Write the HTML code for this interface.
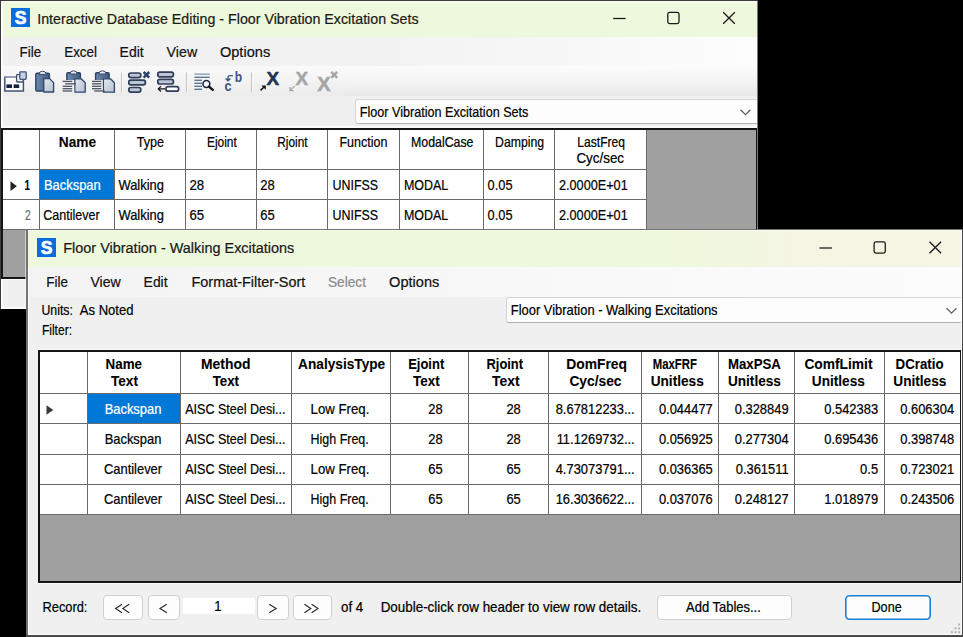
<!DOCTYPE html>
<html><head><meta charset="utf-8"><title>Floor Vibration</title>
<style>
html,body{margin:0;padding:0;}
body{width:963px;height:637px;background:#000;overflow:hidden;position:relative;font-family:"Liberation Sans",sans-serif;}
.r{position:absolute;}
.t{position:absolute;white-space:nowrap;-webkit-text-stroke:0.22px;line-height:20px;transform-origin:0 0;font-family:"Liberation Sans",sans-serif;}
svg{position:absolute;overflow:visible;}
</style></head><body>
<div class="r" style="left:0px;top:0px;width:758px;height:309px;background:#3c3c3c;"></div>
<div class="r" style="left:1px;top:1px;width:756px;height:308px;background:#fcfcfc;"></div>
<div class="r" style="left:757px;top:1px;width:1px;height:308px;background:#7a7a7a;"></div>
<div class="r" style="left:1px;top:1px;width:756px;height:2px;background:#f7fbee;"></div>
<div class="r" style="left:3px;top:3px;width:754px;height:34px;background:#eef8dc;"></div>
<div class="r" style="left:3px;top:37px;width:754px;height:29px;background:linear-gradient(90deg,#f0f0f0 0%,#f2f2f2 50%,#fdfdfd 100%);"></div>
<div class="r" style="left:3px;top:66px;width:754px;height:31px;background:linear-gradient(180deg,#fcfcfc 0%,#f4f4f4 50%,#e7e7e7 100%);"></div>
<div class="r" style="left:3px;top:66px;width:342px;height:30px;background:linear-gradient(180deg,#fafafa 0%,#f3f3f3 50%,#ececec 100%);border-radius:0 0 3px 0;"></div>
<div class="r" style="left:3px;top:96px;width:753px;height:211px;background:#f0f0f0;"></div>
<div class="r" style="left:11px;top:8px;width:19px;height:19px;background:#0a6ddc;"></div>
<svg style="left:11px;top:8px" width="19" height="19" viewBox="0 0 19 19"><text x="9.5" y="15.6" font-family="Liberation Sans" font-weight="bold" font-size="17.5" fill="#fff" stroke="#fff" stroke-width="0.7" text-anchor="middle">S</text></svg>
<span class="t" style="left:37px;top:9px;font-size:15.2px;color:#1a1a1a;transform:translateX(0.20px) scaleX(0.9379);">Interactive Database Editing - Floor Vibration Excitation Sets</span>
<svg style="left:0;top:0" width="963" height="637"><path d="M613.2 18.5h12.4" stroke="#1a1a1a" stroke-width="1.3" fill="none"/><rect x="667.8" y="12.4" width="11.2" height="11.2" rx="1.8" stroke="#1a1a1a" stroke-width="1.3" fill="none"/><path d="M723.2 12.2l11.6 11.6M734.8 12.2l-11.6 11.6" stroke="#1a1a1a" stroke-width="1.3" fill="none"/></svg>
<span class="t" style="left:19px;top:42px;font-size:15.2px;color:#111;transform:translateX(0.60px) scaleX(0.8850);">File</span>
<span class="t" style="left:64px;top:42px;font-size:15.2px;color:#111;transform:translateX(0.20px) scaleX(0.8828);">Excel</span>
<span class="t" style="left:119px;top:42px;font-size:15.2px;color:#111;transform:translateX(0.60px) scaleX(0.9195);">Edit</span>
<span class="t" style="left:166px;top:42px;font-size:15.2px;color:#111;transform:translateX(0.60px) scaleX(0.9366);">View</span>
<span class="t" style="left:219px;top:42px;font-size:15.2px;color:#111;transform:translateX(0.90px) scaleX(0.9607);">Options</span>
<div class="r" style="left:355px;top:99px;width:402px;height:25px;background:#fdfdfd;border:1px solid #d6d6d6;border-bottom-color:#b4b4b4;border-right:none;border-radius:3px 0 0 3px;box-sizing:border-box;"></div>
<svg style="left:0;top:0" width="963" height="637"><path d="M740.6 109.69999999999999l4.9 4.9 4.9-4.9" stroke="#606060" stroke-width="1.3" fill="none"/></svg>
<span class="t" style="left:359px;top:102px;font-size:15px;color:#000;transform:translateX(0.80px) scaleX(0.8401);">Floor Vibration Excitation Sets</span>
<div class="r" style="left:1px;top:126px;width:755px;height:2px;background:#fbfbfb;"></div>
<div class="r" style="left:1px;top:128px;width:756px;height:151px;background:#161616;"></div>
<div class="r" style="left:3px;top:130px;width:753px;height:147px;background:#a0a0a0;"></div>
<div class="r" style="left:1px;top:279px;width:755px;height:1px;background:#fbfbfb;"></div>
<div class="r" style="left:3px;top:130px;width:644px;height:100px;background:#6a6a6a;"></div>
<div class="r" style="left:3px;top:130px;width:36px;height:39px;background:#fff;"></div>
<div class="r" style="left:3px;top:170px;width:36px;height:29px;background:#fff;"></div>
<div class="r" style="left:3px;top:200px;width:36px;height:29px;background:#fff;"></div>
<div class="r" style="left:40px;top:130px;width:74px;height:39px;background:#fff;"></div>
<div class="r" style="left:40px;top:170px;width:74px;height:29px;background:#fff;"></div>
<div class="r" style="left:40px;top:200px;width:74px;height:29px;background:#fff;"></div>
<div class="r" style="left:115px;top:130px;width:70px;height:39px;background:#fff;"></div>
<div class="r" style="left:115px;top:170px;width:70px;height:29px;background:#fff;"></div>
<div class="r" style="left:115px;top:200px;width:70px;height:29px;background:#fff;"></div>
<div class="r" style="left:186px;top:130px;width:70px;height:39px;background:#fff;"></div>
<div class="r" style="left:186px;top:170px;width:70px;height:29px;background:#fff;"></div>
<div class="r" style="left:186px;top:200px;width:70px;height:29px;background:#fff;"></div>
<div class="r" style="left:257px;top:130px;width:70px;height:39px;background:#fff;"></div>
<div class="r" style="left:257px;top:170px;width:70px;height:29px;background:#fff;"></div>
<div class="r" style="left:257px;top:200px;width:70px;height:29px;background:#fff;"></div>
<div class="r" style="left:328px;top:130px;width:71px;height:39px;background:#fff;"></div>
<div class="r" style="left:328px;top:170px;width:71px;height:29px;background:#fff;"></div>
<div class="r" style="left:328px;top:200px;width:71px;height:29px;background:#fff;"></div>
<div class="r" style="left:400px;top:130px;width:83px;height:39px;background:#fff;"></div>
<div class="r" style="left:400px;top:170px;width:83px;height:29px;background:#fff;"></div>
<div class="r" style="left:400px;top:200px;width:83px;height:29px;background:#fff;"></div>
<div class="r" style="left:484px;top:130px;width:70px;height:39px;background:#fff;"></div>
<div class="r" style="left:484px;top:170px;width:70px;height:29px;background:#fff;"></div>
<div class="r" style="left:484px;top:200px;width:70px;height:29px;background:#fff;"></div>
<div class="r" style="left:555px;top:130px;width:91px;height:39px;background:#fff;"></div>
<div class="r" style="left:555px;top:170px;width:91px;height:29px;background:#fff;"></div>
<div class="r" style="left:555px;top:200px;width:91px;height:29px;background:#fff;"></div>
<div class="r" style="left:40px;top:170px;width:74px;height:29px;background:#0078d7;"></div>
<span class="t" style="left:58px;top:132px;font-size:15px;font-weight:bold;-webkit-text-stroke:0.08px;color:#000;transform:translateX(0.80px) scaleX(0.9150);">Name</span>
<span class="t" style="left:136px;top:132px;font-size:15px;color:#000;transform:translateX(0.70px) scaleX(0.8400);">Type</span>
<span class="t" style="left:206px;top:132px;font-size:15px;color:#000;transform:translateX(0.90px) scaleX(0.7973);">Ejoint</span>
<span class="t" style="left:277px;top:132px;font-size:15px;color:#000;transform:translateX(0.20px) scaleX(0.7922);">Rjoint</span>
<span class="t" style="left:339px;top:132px;font-size:15px;color:#000;transform:translateX(0.50px) scaleX(0.8321);">Function</span>
<span class="t" style="left:411px;top:132px;font-size:15px;color:#000;transform:translateX(0.00px) scaleX(0.8237);">ModalCase</span>
<span class="t" style="left:495px;top:132px;font-size:15px;color:#000;transform:translateX(0.10px) scaleX(0.8175);">Damping</span>
<span class="t" style="left:577px;top:132px;font-size:15px;color:#000;transform:translateX(0.30px) scaleX(0.8059);">LastFreq</span>
<span class="t" style="left:576px;top:148px;font-size:15px;color:#000;transform:translateX(0.40px) scaleX(0.8937);">Cyc/sec</span>
<span class="t" style="left:44px;top:175px;font-size:15px;color:#fff;transform:translateX(0.00px) scaleX(0.8607);">Backspan</span>
<span class="t" style="left:118px;top:175px;font-size:15px;color:#000;transform:translateX(0.40px) scaleX(0.8634);">Walking</span>
<span class="t" style="left:189px;top:175px;font-size:15px;color:#000;transform:translateX(0.50px) scaleX(0.8809);">28</span>
<span class="t" style="left:260px;top:175px;font-size:15px;color:#000;transform:translateX(0.20px) scaleX(0.8689);">28</span>
<span class="t" style="left:332px;top:175px;font-size:15px;color:#000;transform:translateX(0.50px) scaleX(0.8291);">UNIFSS</span>
<span class="t" style="left:404px;top:175px;font-size:15px;color:#000;transform:translateX(0.00px) scaleX(0.8300);">MODAL</span>
<span class="t" style="left:487px;top:175px;font-size:15px;color:#000;transform:translateX(0.60px) scaleX(0.8531);">0.05</span>
<span class="t" style="left:559px;top:175px;font-size:15px;color:#000;transform:translateX(0.00px) scaleX(0.8449);">2.0000E+01</span>
<span class="t" style="left:43px;top:205px;font-size:15px;color:#000;transform:translateX(0.20px) scaleX(0.8363);">Cantilever</span>
<span class="t" style="left:118px;top:205px;font-size:15px;color:#000;transform:translateX(0.40px) scaleX(0.8634);">Walking</span>
<span class="t" style="left:189px;top:205px;font-size:15px;color:#000;transform:translateX(0.50px) scaleX(0.8809);">65</span>
<span class="t" style="left:260px;top:205px;font-size:15px;color:#000;transform:translateX(0.20px) scaleX(0.8689);">65</span>
<span class="t" style="left:332px;top:205px;font-size:15px;color:#000;transform:translateX(0.50px) scaleX(0.8291);">UNIFSS</span>
<span class="t" style="left:404px;top:205px;font-size:15px;color:#000;transform:translateX(0.00px) scaleX(0.8300);">MODAL</span>
<span class="t" style="left:487px;top:205px;font-size:15px;color:#000;transform:translateX(0.60px) scaleX(0.8531);">0.05</span>
<span class="t" style="left:559px;top:205px;font-size:15px;color:#000;transform:translateX(0.00px) scaleX(0.8449);">2.0000E+01</span>
<span class="t" style="left:24px;top:175px;font-size:14.5px;font-weight:bold;-webkit-text-stroke:0.08px;color:#000;transform:translateX(0.50px) scaleX(0.6822);">1</span>
<span class="t" style="left:25px;top:205px;font-size:14.5px;color:#6d6d6d;transform:translateX(0.00px) scaleX(0.7070);">2</span>
<svg style="left:0;top:0" width="963" height="637"><path d="M10.5 181.3v9.8l6.3-4.9z" fill="#222"/></svg>
<div class="r" style="left:25px;top:231px;width:1px;height:78px;background:rgba(255,255,255,0.55);"></div>
<div class="r" style="left:26px;top:229px;width:937px;height:408px;background:#727272;"></div>
<div class="r" style="left:28px;top:230px;width:934px;height:405px;background:#fcfcfc;"></div>
<div class="r" style="left:28px;top:230px;width:933px;height:37px;background:linear-gradient(90deg,#eef8dc 0%,#eef8dc 69%,#f4f5e3 83%,#f4f5e3 100%);"></div>
<div class="r" style="left:28px;top:230px;width:933px;height:1px;background:#f7fbee;"></div>
<div class="r" style="left:29px;top:267px;width:932px;height:368px;background:#f0f0f0;"></div>
<div class="r" style="left:29px;top:267px;width:932px;height:30px;background:linear-gradient(90deg,#f3f3f3 0%,#f8f8f8 50%,#fcfcfc 100%);"></div>
<div class="r" style="left:37px;top:238px;width:19px;height:19px;background:#0a6ddc;"></div>
<svg style="left:37px;top:238px" width="19" height="19" viewBox="0 0 19 19"><text x="9.5" y="15.6" font-family="Liberation Sans" font-weight="bold" font-size="17.5" fill="#fff" stroke="#fff" stroke-width="0.7" text-anchor="middle">S</text></svg>
<span class="t" style="left:63px;top:238px;font-size:15.2px;color:#1a1a1a;transform:translateX(0.30px) scaleX(0.9502);">Floor Vibration - Walking Excitations</span>
<svg style="left:0;top:0" width="963" height="637"><path d="M819.5 248.0h12.4" stroke="#1a1a1a" stroke-width="1.3" fill="none"/><rect x="874.1" y="241.9" width="11.2" height="11.2" rx="1.8" stroke="#1a1a1a" stroke-width="1.3" fill="none"/><path d="M929.5 241.7l11.6 11.6M941.0999999999999 241.7l-11.6 11.6" stroke="#1a1a1a" stroke-width="1.3" fill="none"/></svg>
<span class="t" style="left:46px;top:272px;font-size:15.2px;color:#111;transform:translateX(0.30px) scaleX(0.8891);">File</span>
<span class="t" style="left:90px;top:272px;font-size:15.2px;color:#111;transform:translateX(0.40px) scaleX(0.9305);">View</span>
<span class="t" style="left:143px;top:272px;font-size:15.2px;color:#111;transform:translateX(0.60px) scaleX(0.9157);">Edit</span>
<span class="t" style="left:191px;top:272px;font-size:15.2px;color:#111;transform:translateX(0.50px) scaleX(0.9499);">Format-Filter-Sort</span>
<span class="t" style="left:328px;top:272px;font-size:15.2px;color:#8a8a8a;transform:translateX(0.00px) scaleX(0.9000);">Select</span>
<span class="t" style="left:389px;top:272px;font-size:15.2px;color:#111;transform:translateX(0.10px) scaleX(0.9588);">Options</span>
<span class="t" style="left:41px;top:300px;font-size:14.5px;color:#000;transform:translateX(0.50px) scaleX(0.8472);">Units:</span>
<span class="t" style="left:79px;top:300px;font-size:14.5px;color:#000;transform:translateX(0.80px) scaleX(0.9006);">As Noted</span>
<span class="t" style="left:41px;top:320px;font-size:14.5px;color:#000;transform:translateX(0.90px) scaleX(0.8303);">Filter:</span>
<div class="r" style="left:506px;top:297px;width:457px;height:26px;background:#fdfdfd;border:1px solid #d6d6d6;border-bottom-color:#b4b4b4;border-right:none;border-radius:3px 0 0 3px;box-sizing:border-box;"></div>
<svg style="left:0;top:0" width="963" height="637"><path d="M946.6 308.20000000000005l4.9 4.9 4.9-4.9" stroke="#606060" stroke-width="1.3" fill="none"/></svg>
<span class="t" style="left:510px;top:300px;font-size:14.5px;color:#000;transform:translateX(0.80px) scaleX(0.8909);">Floor Vibration - Walking Excitations</span>
<div class="r" style="left:38px;top:349px;width:923px;height:1px;background:#fbfbfb;"></div>
<div class="r" style="left:38px;top:350px;width:924px;height:233px;background:#161616;"></div>
<div class="r" style="left:38px;top:583px;width:923px;height:1px;background:#fafafa;"></div>
<div class="r" style="left:40px;top:352px;width:920px;height:229px;background:#a0a0a0;"></div>
<div class="r" style="left:40px;top:352px;width:920px;height:163px;background:#6a6a6a;"></div>
<div class="r" style="left:40px;top:352px;width:47px;height:41px;background:#fff;"></div>
<div class="r" style="left:40px;top:394px;width:47px;height:29px;background:#fff;"></div>
<div class="r" style="left:40px;top:424px;width:47px;height:30px;background:#fff;"></div>
<div class="r" style="left:40px;top:455px;width:47px;height:29px;background:#fff;"></div>
<div class="r" style="left:40px;top:485px;width:47px;height:29px;background:#fff;"></div>
<div class="r" style="left:88px;top:352px;width:92px;height:41px;background:#fff;"></div>
<div class="r" style="left:88px;top:394px;width:92px;height:29px;background:#fff;"></div>
<div class="r" style="left:88px;top:424px;width:92px;height:30px;background:#fff;"></div>
<div class="r" style="left:88px;top:455px;width:92px;height:29px;background:#fff;"></div>
<div class="r" style="left:88px;top:485px;width:92px;height:29px;background:#fff;"></div>
<div class="r" style="left:181px;top:352px;width:110px;height:41px;background:#fff;"></div>
<div class="r" style="left:181px;top:394px;width:110px;height:29px;background:#fff;"></div>
<div class="r" style="left:181px;top:424px;width:110px;height:30px;background:#fff;"></div>
<div class="r" style="left:181px;top:455px;width:110px;height:29px;background:#fff;"></div>
<div class="r" style="left:181px;top:485px;width:110px;height:29px;background:#fff;"></div>
<div class="r" style="left:292px;top:352px;width:98px;height:41px;background:#fff;"></div>
<div class="r" style="left:292px;top:394px;width:98px;height:29px;background:#fff;"></div>
<div class="r" style="left:292px;top:424px;width:98px;height:30px;background:#fff;"></div>
<div class="r" style="left:292px;top:455px;width:98px;height:29px;background:#fff;"></div>
<div class="r" style="left:292px;top:485px;width:98px;height:29px;background:#fff;"></div>
<div class="r" style="left:391px;top:352px;width:77px;height:41px;background:#fff;"></div>
<div class="r" style="left:391px;top:394px;width:77px;height:29px;background:#fff;"></div>
<div class="r" style="left:391px;top:424px;width:77px;height:30px;background:#fff;"></div>
<div class="r" style="left:391px;top:455px;width:77px;height:29px;background:#fff;"></div>
<div class="r" style="left:391px;top:485px;width:77px;height:29px;background:#fff;"></div>
<div class="r" style="left:469px;top:352px;width:79px;height:41px;background:#fff;"></div>
<div class="r" style="left:469px;top:394px;width:79px;height:29px;background:#fff;"></div>
<div class="r" style="left:469px;top:424px;width:79px;height:30px;background:#fff;"></div>
<div class="r" style="left:469px;top:455px;width:79px;height:29px;background:#fff;"></div>
<div class="r" style="left:469px;top:485px;width:79px;height:29px;background:#fff;"></div>
<div class="r" style="left:549px;top:352px;width:92px;height:41px;background:#fff;"></div>
<div class="r" style="left:549px;top:394px;width:92px;height:29px;background:#fff;"></div>
<div class="r" style="left:549px;top:424px;width:92px;height:30px;background:#fff;"></div>
<div class="r" style="left:549px;top:455px;width:92px;height:29px;background:#fff;"></div>
<div class="r" style="left:549px;top:485px;width:92px;height:29px;background:#fff;"></div>
<div class="r" style="left:642px;top:352px;width:76px;height:41px;background:#fff;"></div>
<div class="r" style="left:642px;top:394px;width:76px;height:29px;background:#fff;"></div>
<div class="r" style="left:642px;top:424px;width:76px;height:30px;background:#fff;"></div>
<div class="r" style="left:642px;top:455px;width:76px;height:29px;background:#fff;"></div>
<div class="r" style="left:642px;top:485px;width:76px;height:29px;background:#fff;"></div>
<div class="r" style="left:719px;top:352px;width:75px;height:41px;background:#fff;"></div>
<div class="r" style="left:719px;top:394px;width:75px;height:29px;background:#fff;"></div>
<div class="r" style="left:719px;top:424px;width:75px;height:30px;background:#fff;"></div>
<div class="r" style="left:719px;top:455px;width:75px;height:29px;background:#fff;"></div>
<div class="r" style="left:719px;top:485px;width:75px;height:29px;background:#fff;"></div>
<div class="r" style="left:795px;top:352px;width:89px;height:41px;background:#fff;"></div>
<div class="r" style="left:795px;top:394px;width:89px;height:29px;background:#fff;"></div>
<div class="r" style="left:795px;top:424px;width:89px;height:30px;background:#fff;"></div>
<div class="r" style="left:795px;top:455px;width:89px;height:29px;background:#fff;"></div>
<div class="r" style="left:795px;top:485px;width:89px;height:29px;background:#fff;"></div>
<div class="r" style="left:885px;top:352px;width:75px;height:41px;background:#fff;"></div>
<div class="r" style="left:885px;top:394px;width:75px;height:29px;background:#fff;"></div>
<div class="r" style="left:885px;top:424px;width:75px;height:30px;background:#fff;"></div>
<div class="r" style="left:885px;top:455px;width:75px;height:29px;background:#fff;"></div>
<div class="r" style="left:885px;top:485px;width:75px;height:29px;background:#fff;"></div>
<div class="r" style="left:88px;top:394px;width:92px;height:29px;background:#0078d7;"></div>
<span class="t" style="left:105px;top:354px;font-size:14px;font-weight:bold;-webkit-text-stroke:0.08px;color:#000;transform:translateX(0.60px) scaleX(0.9548);">Name</span>
<span class="t" style="left:111px;top:371px;font-size:14px;font-weight:bold;-webkit-text-stroke:0.08px;color:#000;transform:translateX(0.00px) scaleX(0.9694);">Text</span>
<span class="t" style="left:201px;top:354px;font-size:14px;font-weight:bold;-webkit-text-stroke:0.08px;color:#000;transform:translateX(0.00px) scaleX(0.9930);">Method</span>
<span class="t" style="left:212px;top:371px;font-size:14px;font-weight:bold;-webkit-text-stroke:0.08px;color:#000;transform:translateX(0.70px) scaleX(0.9477);">Text</span>
<span class="t" style="left:298px;top:354px;font-size:14px;font-weight:bold;-webkit-text-stroke:0.08px;color:#000;transform:translateX(0.10px) scaleX(0.9759);">AnalysisType</span>
<span class="t" style="left:408px;top:354px;font-size:14px;font-weight:bold;-webkit-text-stroke:0.08px;color:#000;transform:translateX(0.20px) scaleX(0.9260);">Ejoint</span>
<span class="t" style="left:413px;top:371px;font-size:14px;font-weight:bold;-webkit-text-stroke:0.08px;color:#000;transform:translateX(0.10px) scaleX(0.9622);">Text</span>
<span class="t" style="left:486px;top:354px;font-size:14px;font-weight:bold;-webkit-text-stroke:0.08px;color:#000;transform:translateX(0.50px) scaleX(0.9211);">Rjoint</span>
<span class="t" style="left:492px;top:371px;font-size:14px;font-weight:bold;-webkit-text-stroke:0.08px;color:#000;transform:translateX(0.00px) scaleX(0.9910);">Text</span>
<span class="t" style="left:566px;top:354px;font-size:14px;font-weight:bold;-webkit-text-stroke:0.08px;color:#000;transform:translateX(0.20px) scaleX(0.9896);">DomFreq</span>
<span class="t" style="left:569px;top:371px;font-size:14px;font-weight:bold;-webkit-text-stroke:0.08px;color:#000;transform:translateX(0.40px) scaleX(0.9842);">Cyc/sec</span>
<span class="t" style="left:652px;top:354px;font-size:14px;font-weight:bold;-webkit-text-stroke:0.08px;color:#000;transform:translateX(0.70px) scaleX(0.8138);">MaxFRF</span>
<span class="t" style="left:650px;top:371px;font-size:14px;font-weight:bold;-webkit-text-stroke:0.08px;color:#000;transform:translateX(0.70px) scaleX(0.9736);">Unitless</span>
<span class="t" style="left:727px;top:354px;font-size:14px;font-weight:bold;-webkit-text-stroke:0.08px;color:#000;transform:translateX(0.90px) scaleX(0.9464);">MaxPSA</span>
<span class="t" style="left:727px;top:371px;font-size:14px;font-weight:bold;-webkit-text-stroke:0.08px;color:#000;transform:translateX(0.90px) scaleX(0.9736);">Unitless</span>
<span class="t" style="left:804px;top:354px;font-size:14px;font-weight:bold;-webkit-text-stroke:0.08px;color:#000;transform:translateX(0.40px) scaleX(0.9843);">ComfLimit</span>
<span class="t" style="left:811px;top:371px;font-size:14px;font-weight:bold;-webkit-text-stroke:0.08px;color:#000;transform:translateX(0.80px) scaleX(0.9736);">Unitless</span>
<span class="t" style="left:895px;top:354px;font-size:14px;font-weight:bold;-webkit-text-stroke:0.08px;color:#000;transform:translateX(0.60px) scaleX(0.9493);">DCratio</span>
<span class="t" style="left:893px;top:371px;font-size:14px;font-weight:bold;-webkit-text-stroke:0.08px;color:#000;transform:translateX(0.30px) scaleX(0.9736);">Unitless</span>
<span class="t" style="left:104px;top:399px;font-size:14.5px;color:#fff;transform:translateX(0.63px) scaleX(0.8910);">Backspan</span>
<span class="t" style="left:185px;top:399px;font-size:14.5px;color:#000;transform:translateX(0.20px) scaleX(0.8642);">AISC Steel Desi...</span>
<span class="t" style="left:310px;top:399px;font-size:14.5px;color:#000;transform:translateX(0.60px) scaleX(0.9116);">Low Freq.</span>
<span class="t" style="left:428px;top:399px;font-size:14.5px;color:#000;transform:translateX(0.32px) scaleX(0.8910);">28</span>
<span class="t" style="left:506px;top:399px;font-size:14.5px;color:#000;transform:translateX(0.42px) scaleX(0.8910);">28</span>
<span class="t" style="left:555px;top:399px;font-size:14.5px;color:#000;transform:translateX(0.68px) scaleX(0.8910);">8.67812233...</span>
<span class="t" style="left:658px;top:399px;font-size:14.5px;color:#000;transform:translateX(0.89px) scaleX(0.8910);">0.044477</span>
<span class="t" style="left:734px;top:399px;font-size:14.5px;color:#000;transform:translateX(0.69px) scaleX(0.8910);">0.328849</span>
<span class="t" style="left:824px;top:399px;font-size:14.5px;color:#000;transform:translateX(0.19px) scaleX(0.8910);">0.542383</span>
<span class="t" style="left:900px;top:399px;font-size:14.5px;color:#000;transform:translateX(0.19px) scaleX(0.8910);">0.606304</span>
<span class="t" style="left:104px;top:429px;font-size:14.5px;color:#000;transform:translateX(0.63px) scaleX(0.8910);">Backspan</span>
<span class="t" style="left:185px;top:429px;font-size:14.5px;color:#000;transform:translateX(0.20px) scaleX(0.8642);">AISC Steel Desi...</span>
<span class="t" style="left:310px;top:429px;font-size:14.5px;color:#000;transform:translateX(0.60px) scaleX(0.8584);">High Freq.</span>
<span class="t" style="left:428px;top:429px;font-size:14.5px;color:#000;transform:translateX(0.32px) scaleX(0.8910);">28</span>
<span class="t" style="left:506px;top:429px;font-size:14.5px;color:#000;transform:translateX(0.42px) scaleX(0.8910);">28</span>
<span class="t" style="left:556px;top:429px;font-size:14.5px;color:#000;transform:translateX(0.63px) scaleX(0.8910);">11.1269732...</span>
<span class="t" style="left:658px;top:429px;font-size:14.5px;color:#000;transform:translateX(0.89px) scaleX(0.8910);">0.056925</span>
<span class="t" style="left:734px;top:429px;font-size:14.5px;color:#000;transform:translateX(0.69px) scaleX(0.8910);">0.277304</span>
<span class="t" style="left:824px;top:429px;font-size:14.5px;color:#000;transform:translateX(0.19px) scaleX(0.8910);">0.695436</span>
<span class="t" style="left:900px;top:429px;font-size:14.5px;color:#000;transform:translateX(0.19px) scaleX(0.8910);">0.398748</span>
<span class="t" style="left:103px;top:459px;font-size:14.5px;color:#000;transform:translateX(0.93px) scaleX(0.8910);">Cantilever</span>
<span class="t" style="left:185px;top:459px;font-size:14.5px;color:#000;transform:translateX(0.20px) scaleX(0.8642);">AISC Steel Desi...</span>
<span class="t" style="left:310px;top:459px;font-size:14.5px;color:#000;transform:translateX(0.60px) scaleX(0.9116);">Low Freq.</span>
<span class="t" style="left:428px;top:459px;font-size:14.5px;color:#000;transform:translateX(0.32px) scaleX(0.8910);">65</span>
<span class="t" style="left:506px;top:459px;font-size:14.5px;color:#000;transform:translateX(0.42px) scaleX(0.8910);">65</span>
<span class="t" style="left:555px;top:459px;font-size:14.5px;color:#000;transform:translateX(0.68px) scaleX(0.8910);">4.73073791...</span>
<span class="t" style="left:658px;top:459px;font-size:14.5px;color:#000;transform:translateX(0.89px) scaleX(0.8910);">0.036365</span>
<span class="t" style="left:735px;top:459px;font-size:14.5px;color:#000;transform:translateX(0.70px) scaleX(0.8910);">0.361511</span>
<span class="t" style="left:860px;top:459px;font-size:14.5px;color:#000;transform:translateX(0.11px) scaleX(0.8910);">0.5</span>
<span class="t" style="left:900px;top:459px;font-size:14.5px;color:#000;transform:translateX(0.19px) scaleX(0.8910);">0.723021</span>
<span class="t" style="left:103px;top:489px;font-size:14.5px;color:#000;transform:translateX(0.93px) scaleX(0.8910);">Cantilever</span>
<span class="t" style="left:185px;top:489px;font-size:14.5px;color:#000;transform:translateX(0.20px) scaleX(0.8642);">AISC Steel Desi...</span>
<span class="t" style="left:310px;top:489px;font-size:14.5px;color:#000;transform:translateX(0.60px) scaleX(0.8584);">High Freq.</span>
<span class="t" style="left:428px;top:489px;font-size:14.5px;color:#000;transform:translateX(0.32px) scaleX(0.8910);">65</span>
<span class="t" style="left:506px;top:489px;font-size:14.5px;color:#000;transform:translateX(0.42px) scaleX(0.8910);">65</span>
<span class="t" style="left:555px;top:489px;font-size:14.5px;color:#000;transform:translateX(0.68px) scaleX(0.8910);">16.3036622...</span>
<span class="t" style="left:658px;top:489px;font-size:14.5px;color:#000;transform:translateX(0.89px) scaleX(0.8910);">0.037076</span>
<span class="t" style="left:734px;top:489px;font-size:14.5px;color:#000;transform:translateX(0.69px) scaleX(0.8910);">0.248127</span>
<span class="t" style="left:824px;top:489px;font-size:14.5px;color:#000;transform:translateX(0.19px) scaleX(0.8910);">1.018979</span>
<span class="t" style="left:900px;top:489px;font-size:14.5px;color:#000;transform:translateX(0.19px) scaleX(0.8910);">0.243506</span>
<svg style="left:0;top:0" width="963" height="637"><path d="M46.5 405.2v9.6l6.8-4.8z" fill="#3a3a3a"/></svg>
<span class="t" style="left:42px;top:597px;font-size:14.5px;color:#000;transform:translateX(0.60px) scaleX(0.8828);">Record:</span>
<div class="r" style="left:103px;top:595px;width:40px;height:25px;background:#fdfdfd;border:1px solid #d0d0d0;border-radius:4px;box-sizing:border-box;"></div>
<div class="r" style="left:148px;top:595px;width:32px;height:25px;background:#fdfdfd;border:1px solid #d0d0d0;border-radius:4px;box-sizing:border-box;"></div>
<div class="r" style="left:257px;top:595px;width:32px;height:25px;background:#fdfdfd;border:1px solid #d0d0d0;border-radius:4px;box-sizing:border-box;"></div>
<div class="r" style="left:293px;top:595px;width:39px;height:25px;background:#fdfdfd;border:1px solid #d0d0d0;border-radius:4px;box-sizing:border-box;"></div>
<div class="r" style="left:183px;top:598px;width:72px;height:16px;background:#fff;"></div>
<svg style="left:0;top:0" width="963" height="637"><path d="M122 604.2L115.6 608.5L122 612.8M129.2 604.2L122.8 608.5L129.2 612.8M166.8 604.2L160 608.5L166.8 612.8M269.2 604.2L276.2 608.5L269.2 612.8M304.4 604.2L310.8 608.5L304.4 612.8M311.6 604.2L318 608.5L311.6 612.8" stroke="#2a2a2a" stroke-width="1.15" fill="none"/></svg>
<span class="t" style="left:214px;top:596px;font-size:14.5px;color:#000;transform:translateX(0.17px) scaleX(0.9000);">1</span>
<span class="t" style="left:341px;top:597px;font-size:14.5px;color:#000;transform:translateX(0.00px) scaleX(0.9178);">of 4</span>
<span class="t" style="left:380px;top:597px;font-size:14.5px;color:#000;transform:translateX(0.70px) scaleX(0.9236);">Double-click row header to view row details.</span>
<div class="r" style="left:657px;top:595px;width:135px;height:25px;background:#fdfdfd;border:1px solid #d0d0d0;border-radius:4px;box-sizing:border-box;"></div>
<span class="t" style="left:686px;top:597px;font-size:14.5px;color:#000;transform:translateX(0.00px) scaleX(0.8951);">Add Tables...</span>
<svg style="left:0;top:0" width="963" height="637"><rect x="845.8" y="595.8" width="84.4" height="23.4" rx="3.6" fill="#fdfdfd" stroke="#1a7fd6" stroke-width="1.6"/></svg>
<span class="t" style="left:871px;top:597px;font-size:14.5px;color:#000;transform:translateX(0.50px) scaleX(0.8706);">Done</span>
<svg style="left:0;top:0" width="963" height="637"><rect x="958.1" y="623.6" width="2" height="2" fill="#b4b4b4"/><rect x="954.5" y="627.4" width="2" height="2" fill="#b4b4b4"/><rect x="958.1" y="627.4" width="2" height="2" fill="#b4b4b4"/><rect x="950.9" y="631.2" width="2" height="2" fill="#b4b4b4"/><rect x="954.5" y="631.2" width="2" height="2" fill="#b4b4b4"/><rect x="958.1" y="631.2" width="2" height="2" fill="#b4b4b4"/></svg>
<div class="r" style="left:961px;top:231px;width:1px;height:404px;background:#fcfcfc;"></div>
<div class="r" style="left:962px;top:229px;width:1px;height:408px;background:#4a4a4a;"></div>
<div class="r" style="left:28px;top:634px;width:934px;height:1px;background:#fcfcfc;"></div>
<div class="r" style="left:26px;top:635px;width:937px;height:2px;background:#4a4a4a;"></div>
<svg style="left:0;top:0" width="963" height="637"><rect x="4.8" y="77.2" width="18.6" height="13.8" fill="#fff" stroke="#3d5475" stroke-width="1.5"/><rect x="4.8" y="76.6" width="13" height="1.2" fill="#9fb0c6"/><rect x="6.4" y="84.4" width="5.6" height="3.6" fill="#152341"/><rect x="13.6" y="84.4" width="5.6" height="3.6" fill="#152341"/><rect x="16.6" y="74.6" width="6.6" height="7.4" rx="0.8" fill="#f4f6f9" stroke="#3d5475" stroke-width="1.3"/><rect x="19.8" y="71.8" width="6.4" height="7.6" rx="0.8" fill="#c9d2e0" stroke="#3d5475" stroke-width="1.3"/><defs><linearGradient id="gb" x1="0" y1="0" x2="1" y2="0"><stop offset="0" stop-color="#6f8aae"/><stop offset="1" stop-color="#3f5a7e"/></linearGradient><linearGradient id="gp" x1="0" y1="0" x2="1" y2="1"><stop offset="0" stop-color="#e4eaf1"/><stop offset="1" stop-color="#b4c1d2"/></linearGradient></defs><rect x="35.8" y="73.2" width="13.6" height="17.8" rx="1.2" fill="url(#gb)" stroke="#2d4263" stroke-width="1.4"/><path d="M38.99999999999999 74.4q0-3.2 3.6-3.2t3.6 3.2z" fill="#e8edf3" stroke="#34496a" stroke-width="1"/><path d="M43.8 78.6h5.800000000000001l4 4v9.4h-9.8z" fill="url(#gp)" stroke="#2f4566" stroke-width="1.3" stroke-linejoin="round"/><rect x="66.8" y="72.8" width="13.6" height="12" rx="1.2" fill="url(#gb)" stroke="#2d4263" stroke-width="1.4"/><path d="M70.0 74.0q0-3.2 3.6-3.2t3.6 3.2z" fill="#e8edf3" stroke="#34496a" stroke-width="1"/><path d="M74.8 78.8h6.4l4 4v9.4h-10.4z" fill="url(#gp)" stroke="#2f4566" stroke-width="1.3" stroke-linejoin="round"/><rect x="61" y="80" width="13.2" height="12.8" fill="#f1f1f1"/><rect x="62.6" y="80.75" width="9.6" height="1.3" fill="#4c5564"/><rect x="65.2" y="83.14999999999999" width="10.8" height="1.3" fill="#4c5564"/><rect x="62.6" y="85.64999999999999" width="9.6" height="1.3" fill="#4c5564"/><rect x="62.6" y="88.05" width="9.6" height="1.3" fill="#4c5564"/><rect x="62.6" y="90.35" width="9.6" height="1.3" fill="#4c5564"/><rect x="95.6" y="72.8" width="13.6" height="12" rx="1.2" fill="url(#gb)" stroke="#2d4263" stroke-width="1.4"/><path d="M98.8 74.0q0-3.2 3.6-3.2t3.6 3.2z" fill="#e8edf3" stroke="#34496a" stroke-width="1"/><path d="M103.4 78.8h7l4 4v9.4h-11z" fill="url(#gp)" stroke="#2f4566" stroke-width="1.3" stroke-linejoin="round"/><rect x="91" y="80" width="11.8" height="12.8" fill="#f1f1f1"/><rect x="92" y="80.75" width="9.4" height="1.3" fill="#4c5564"/><rect x="92" y="83.14999999999999" width="9.4" height="1.3" fill="#4c5564"/><rect x="92" y="85.64999999999999" width="9.4" height="1.3" fill="#4c5564"/><rect x="92" y="88.05" width="9.4" height="1.3" fill="#4c5564"/><rect x="94.2" y="90.35" width="10.6" height="1.3" fill="#4c5564"/><rect x="121" y="72.5" width="1" height="20" fill="#c4c4c4"/><rect x="122" y="72.5" width="1" height="20" fill="#fafafa"/><rect x="128.8" y="73" width="12" height="4.6" rx="2" fill="#bcc6d7" stroke="#303e58" stroke-width="1.7"/><rect x="128.8" y="80.2" width="16.6" height="4.6" rx="2" fill="#bcc6d7" stroke="#303e58" stroke-width="1.7"/><rect x="128.8" y="87.5" width="12" height="4.6" rx="2" fill="#bcc6d7" stroke="#303e58" stroke-width="1.7"/><path d="M143.6 72l5.6 5.6M149.2 72l-5.6 5.6" stroke="#2d4466" stroke-width="2.5"/><rect x="157.8" y="72.2" width="15.6" height="4.6" rx="2" fill="#bcc6d7" stroke="#303e58" stroke-width="1.7"/><rect x="157.8" y="79.4" width="15.6" height="4.6" rx="2" fill="#bcc6d7" stroke="#303e58" stroke-width="1.7"/><rect x="166" y="86.6" width="12.6" height="4.6" rx="2" fill="#fff" stroke="#303e58" stroke-width="1.7"/><path d="M165.4 88.9h-7M161 86.3l-2.8 2.6 2.8 2.6" stroke="#1a1a1a" stroke-width="1.2" fill="none"/><rect x="186" y="72.5" width="1" height="20" fill="#c4c4c4"/><rect x="187" y="72.5" width="1" height="20" fill="#fafafa"/><rect x="194.4" y="73.5" width="15.4" height="1.4" fill="#8fa0b8"/><rect x="194.4" y="76.6" width="15.4" height="1.4" fill="#5f7492"/><rect x="194.4" y="79.6" width="7.6" height="1.4" fill="#5f7492"/><rect x="194.4" y="82.6" width="7.6" height="1.4" fill="#5f7492"/><rect x="194.4" y="85.6" width="7.6" height="1.4" fill="#5f7492"/><rect x="194.4" y="88.6" width="7.6" height="1.4" fill="#5f7492"/><circle cx="206.4" cy="84" r="3.4" fill="#f4f7fb" stroke="#16213a" stroke-width="1.5"/><path d="M209 86.6l3.8 3.2" stroke="#111" stroke-width="2.4" stroke-linecap="round"/><text transform="translate(234.8 82.1) scale(0.86 1)" font-family="Liberation Sans" font-weight="bold" font-size="14" fill="#3a5680">b</text><text transform="translate(224.6 91.3) scale(0.9 1)" font-family="Liberation Sans" font-weight="bold" font-size="14" fill="#3a5680">c</text><path d="M233 75.6h-3q-2 0-2 2v3M225.6 78.4l2.4 2.4 2.4-2.4" stroke="#3a5680" stroke-width="1.4" fill="none"/><rect x="251" y="72.5" width="1" height="20" fill="#c4c4c4"/><rect x="252" y="72.5" width="1" height="20" fill="#fafafa"/><text x="266.4" y="85.4" font-family="Liberation Sans" font-weight="bold" font-size="18.9" fill="#1f3557" stroke="#1f3557" stroke-width="0.5">X</text><path d="M260.6 90.4l3.6-3.6" stroke="#111" stroke-width="1.5" fill="none"/><path d="M261.4 85.4h4.4v4.4z" fill="#111"/><text x="295.6" y="85.4" font-family="Liberation Sans" font-weight="bold" font-size="18.9" fill="#a6a6a6" stroke="#a6a6a6" stroke-width="0.5">X</text><path d="M294.6 86l-4.4 4.4M293.6 90.6h-3.6v-3.6" stroke="#a6a6a6" stroke-width="1.2" fill="none"/><text x="317.3" y="90.6" font-family="Liberation Sans" font-weight="bold" font-size="20" fill="#a6a6a6" stroke="#a6a6a6" stroke-width="0.5">X</text><path d="M331.2 71.8l6 6M337.2 71.8l-6 6" stroke="#a6a6a6" stroke-width="2.6"/></svg>
</body></html>
